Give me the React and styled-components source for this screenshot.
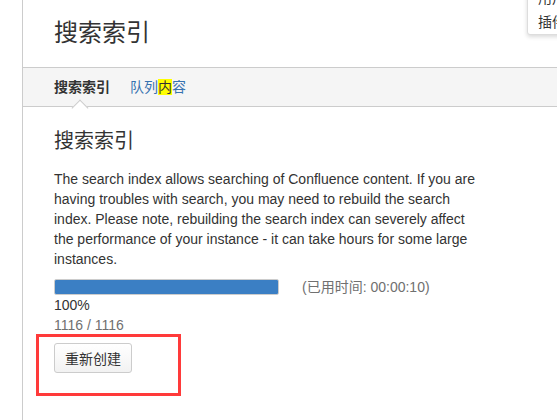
import styled, { createGlobalStyle } from 'styled-components';

const GlobalStyle = createGlobalStyle`
    html, body {
        margin: 0;
        padding: 0;
        background: #fff;
    }
    body {
        font-family: "Liberation Sans", Arial, "Noto Sans CJK SC", sans-serif;
        font-size: 14px;
        color: #333;
    }
`

const Page = styled.div`
    position: relative;
    display: flex;
    height: 420px;
    overflow: hidden;
`

const Gutter = styled.div`
    width: 22px;
    flex: none;
`

const Panel = styled.main`
    flex: 1;
    border-left: 1px solid #ccc;
    display: flex;
    flex-direction: column;
`

const Header = styled.header`
    height: 67px;
    padding-left: 31px;
    display: flex;
    align-items: center;
    border-bottom: 1px solid #ccc;
`

const Title = styled.h1`
    margin: 0 0 2px;
    font-size: 24px;
    font-weight: normal;
    line-height: 30px;
    color: #333;
`

const TabBar = styled.ul`
    list-style: none;
    margin: 0;
    padding: 0 0 0 31px;
    height: 38px;
    display: flex;
    gap: 20px;
    align-items: center;
    background: #f5f5f5;
    border-bottom: 1px solid #ccc;
`

const Tab = styled.li`
    position: relative;
    line-height: 20px;
    font-weight: ${p => (p.$active ? 'bold' : 'normal')};
    color: ${p => (p.$active ? '#333' : '#3572b0')};

    ${p => p.$active && `
        &::after {
            content: "";
            position: absolute;
            left: 50%;
            bottom: -17px;
            width: 11px;
            height: 11px;
            margin-left: -8px;
            background: #fff;
            border-left: 1px solid #ccc;
            border-top: 1px solid #ccc;
            transform: rotate(45deg);
        }
    `}
`

const Mark = styled.mark`
    background: #ffff00;
    color: #333;
`

const Content = styled.section`
    padding: 22px 31px 0;
    width: 432px;
`

const Heading = styled.h2`
    margin: 0 0 16px;
    font-size: 20px;
    font-weight: normal;
    line-height: 24px;
    color: #333;
`

const Text = styled.p`
    margin: 0 0 10px;
    line-height: 20px;
`

const ProgressRow = styled.div`
    display: flex;
    align-items: center;
    gap: 23px;
    height: 16px;
`

const Bar = styled.div`
    width: 223px;
    height: 14px;
    border: 1px solid #ccc;
    border-radius: 2px;
    background: #f5f5f5;
    overflow: hidden;
`

const Fill = styled.div`
    height: 100%;
    background: #3b7fc4;
`

const Elapsed = styled.span`
    color: #707070;
    line-height: 20px;
`

const Line = styled.div`
    line-height: 20px;
    color: ${p => p.$muted ? '#707070' : '#333'};
`

const ButtonWrap = styled.div`
    position: relative;
    margin-top: 8px;
    align-self: flex-start;
`

const Button = styled.button`
    font-family: inherit;
    font-size: 14px;
    color: #333;
    height: 30px;
    padding: 0 10px;
    border: 1px solid #ccc;
    border-radius: 3px;
    background: linear-gradient(#fff, #f2f2f2);
    cursor: pointer;
`

const Highlight = styled.div`
    position: absolute;
    left: -18px;
    top: -9px;
    width: 139px;
    height: 56px;
    border: 3px solid #ff3a3a;
    pointer-events: none;
`

const Actions = styled.div`
    display: flex;
    flex-direction: column;
`

const Menu = styled.div`
    position: absolute;
    top: -15px;
    left: 527px;
    width: 60px;
    padding: 0 0 0 10px;
    background: #fff;
    border: 1px solid #ddd;
    border-radius: 3px;
    box-shadow: 0 2px 4px rgba(0, 0, 0, 0.15);
`

const MenuItem = styled.div`
    line-height: 24px;
    color: #333;
    white-space: nowrap;
`

const App = () => {
    const done = 1116;
    const total = 1116;

    return (
        <Page>
            <GlobalStyle />
            <Gutter />
            <Panel>
                <Header>
                    <Title>搜索索引</Title>
                </Header>
                <TabBar>
                    <Tab $active>搜索索引</Tab>
                    <Tab>队列<Mark>内</Mark>容</Tab>
                </TabBar>
                <Content>
                    <Heading>搜索索引</Heading>
                    <Text>
                        The search index allows searching of Confluence content. If you are
                        having troubles with search, you may need to rebuild the search
                        index. Please note, rebuilding the search index can severely affect
                        the performance of your instance - it can take hours for some large
                        instances.
                    </Text>
                    <Actions>
                        <ProgressRow>
                            <Bar>
                                <Fill style={{ width: `${(done / total) * 100}%` }} />
                            </Bar>
                            <Elapsed>(已用时间: 00:00:10)</Elapsed>
                        </ProgressRow>
                        <Line>100%</Line>
                        <Line $muted>{done} / {total}</Line>
                        <ButtonWrap>
                            <Button>重新创建</Button>
                            <Highlight />
                        </ButtonWrap>
                    </Actions>
                </Content>
            </Panel>
            <Menu>
                <MenuItem>用户</MenuItem>
                <MenuItem>插件</MenuItem>
            </Menu>
        </Page>
    );
}

export default App
